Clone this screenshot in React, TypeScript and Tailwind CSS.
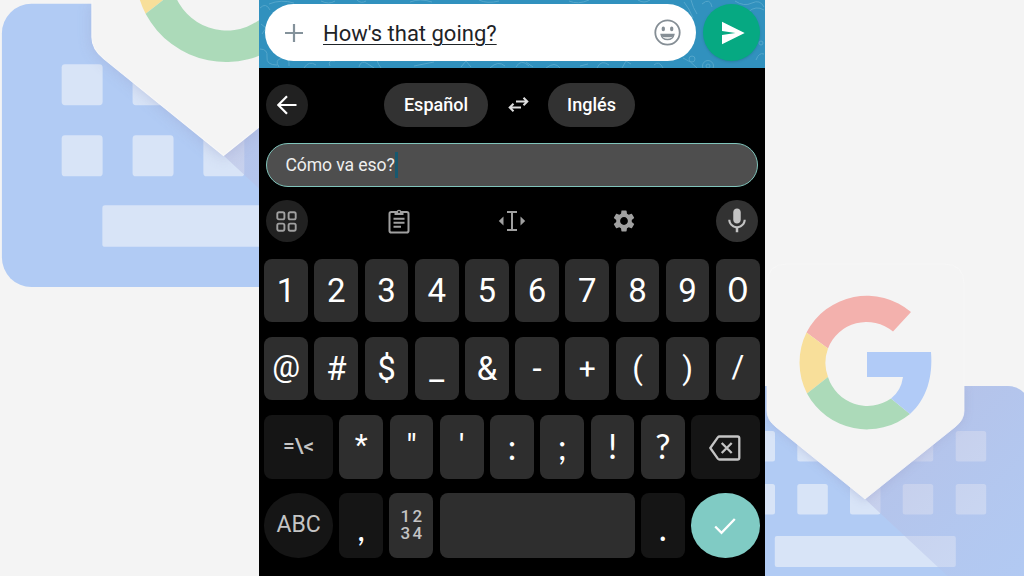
import clsx from "clsx";
import { MdMic, MdSettings } from "react-icons/md";

type KeyItem = {
  label: string;
  // fine tuning of the glyph inside the key
  className?: string;
};

const numberKeys: KeyItem[] = [
  { label: "1" },
  { label: "2" },
  { label: "3" },
  { label: "4" },
  { label: "5" },
  { label: "6" },
  { label: "7" },
  { label: "8" },
  { label: "9" },
  { label: "0", className: "font-['Lato'] text-[34px] pb-[3px]" },
];

const symbolKeys: KeyItem[] = [
  { label: "@", className: "text-[31px] pb-1" },
  { label: "#" },
  { label: "$" },
  { label: "_" },
  { label: "&" },
  { label: "-" },
  { label: "+", className: "text-[30px]" },
  { label: "(", className: "text-[31px]" },
  { label: ")", className: "text-[31px]" },
  { label: "/", className: "text-[31px] pb-1" },
];

const punctuationKeys: KeyItem[] = [
  { label: "*", className: "text-[30px] pb-1" },
  { label: '"' },
  { label: "'" },
  { label: ":", className: "font-['Lato'] text-[34px]" },
  { label: ";", className: "font-['Lato'] text-[34px]" },
  { label: "!", className: "font-['Lato'] text-[34px] pb-[2px]" },
  { label: "?", className: "font-['Lato'] text-[34px] pb-[2px]" },
];

function Key({ label, className }: KeyItem) {
  return (
    <button className="flex h-full flex-1 items-center justify-center rounded-lg bg-[#2e2e2e] text-white">
      <span className={clsx("leading-none", className ?? "text-[33px]")}>
        {label}
      </span>
    </button>
  );
}

// Keyboard with the G card on top
function GboardArt({ id }: { id: string }) {
  return (
    <>
      <defs>
        <linearGradient
          id={`${id}-shade`}
          gradientUnits="userSpaceOnUse"
          x1="110"
          y1="440"
          x2="260"
          y2="590"
        >
          <stop offset="0" stopColor="#b8bce0" stopOpacity="0.6" />
          <stop offset="1" stopColor="#b3c6ef" stopOpacity="0.3" />
        </linearGradient>
        <filter id={`${id}-blur`} x="-20%" y="-20%" width="140%" height="140%">
          <feGaussianBlur stdDeviation="5" />
        </filter>
        <clipPath id={`${id}-clip`}>
          <rect x="-65" y="386" width="330" height="211" rx="22" />
        </clipPath>
      </defs>
      <rect x="-65" y="386" width="330" height="211" rx="22" fill="#b1cbf4" />
      <g fill="#d8e4f7">
        {[-20.5, 32.3, 85, 137.7, 190.7].map((x) => (
          <g key={x}>
            <rect x={x} y="431" width="30.5" height="30.5" rx="2.5" />
            <rect x={x} y="484" width="30.5" height="30.5" rx="2.5" />
          </g>
        ))}
        <rect x="9.8" y="536" width="181" height="31" rx="2" />
      </g>
      <g clipPath={`url(#${id}-clip)`}>
        <path
          d="M100 499 205 597H265V386H199V413Z"
          fill={`url(#${id}-shade)`}
        />
        <path
          d="M2 386V413Q2 420 10 427L100 501L190 427Q199 420 199 413V386Z"
          fill="#9da4cd"
          opacity="0.45"
          filter={`url(#${id}-blur)`}
        />
      </g>
      <path
        d="M22 264H179Q199 264 199 284V411Q199 420 190 427L100 499L11 427Q2 420 2 411V284Q2 264 22 264Z"
        fill="#f4f4f4"
        stroke="#f8f8f8"
        strokeWidth="0.8"
      />
      <path
        d="M146 312A68 68 0 0 0 41.5 332.5L63 348.5A41.3 41.3 0 0 1 128 331.500Z"
        fill="#f3b1ad"
      />
      <path
        d="M41.5 332.5A68 68 0 0 0 42 393.5L63 377A41.3 41.3 0 0 1 63 348.5Z"
        fill="#f8df9a"
      />
      <path
        d="M42 393.5A68 68 0 0 0 145 414L126 398.5A41.3 41.3 0 0 1 63 377Z"
        fill="#acdab9"
      />
      <path
        d="M102 352H166C168 376 162 399 145 414L126 398.5Q136 391 138 377H102Z"
        fill="#b1cbf7"
      />
    </>
  );
}

function ChatBar() {
  return (
    <div className="relative flex h-[68px] shrink-0 items-start bg-[#3191be] pt-1 pl-1.5">
      {/* Wallpaper doodles */}
      <svg
        className="absolute inset-0"
        width="506"
        height="68"
        fill="none"
        stroke="#54a6cb"
        strokeWidth="1"
      >
        <path d="M1 8q6-6 10 2M2 24l5 4-4 6M1 49q8 0 7 8T18 65M20 67q-5-7 3-9t7 8M45 68q5-8 12-3M71 66q-3-6 5-5M100 67q2-8 9-3l6 4M122 68q-6-8-3-13M155 66l20-4M202 67l5-6 5 6M231 68q8-8 15-2M257 67q5-9 13-1M267 62l7 5M287 68q9-7 14 0M321 66l8-2M338 68q4-9 12-3M363 68l4-7 5 3M395 65q5-5 9 3M424 58q8 3 14 10" />
        <path d="M10 4q12-5 25-1M62 1q8 4 14 0M98 0q4 4 9 1M151 2q10-4 22 0M220 0q8 4 20 1M310 1q9 4 20-1M379 0q6 4 12 0M425 2q5 6 9 16M432 0q2 8 6 14M443 4q8-7 10 3M476 1q9 6 17 2t12 4M489 12q8-7 16-2M497 60q3-8 8-6" />
        <circle cx="433" cy="59" r="3" />
        <circle cx="449" cy="66" r="5.5" />
        <circle cx="449" cy="66" r="2" />
        <circle cx="502" cy="43" r="2" />
      </svg>
      <div className="relative flex h-[57px] w-[430.5px] items-center rounded-full bg-white pr-[14.5px] pl-[19.5px]">
        <svg width="18" height="18" stroke="#84929b" strokeWidth="2.2">
          <path d="M9 0v18M0 9h18" />
        </svg>
        <span className="ml-[20.5px] flex-1 pt-[2px] text-[22px] leading-none text-[#1e2327] underline decoration-1 underline-offset-[3px]">
          How&apos;s that going?
        </span>
        <svg width="27" height="27" fill="none" stroke="#858e95">
          <circle cx="13.5" cy="13.5" r="12.2" strokeWidth="1.8" />
          <ellipse cx="9.3" cy="9.9" rx="1.7" ry="2.4" fill="#858e95" stroke="none" />
          <ellipse cx="17.7" cy="9.9" rx="1.7" ry="2.4" fill="#858e95" stroke="none" />
          <path d="M7 15.3h13c-.6 3.3-3 5.2-6.5 5.2S7.6 18.6 7 15.3Z" strokeWidth="1.3" />
          <path d="M7.5 15.5h12l-.7 2.2c-3 .8-7.6.8-10.6 0Z" fill="#858e95" stroke="none" />
        </svg>
      </div>
      <button className="relative ml-[7px] flex size-[57px] items-center justify-center rounded-full bg-[#06a982] shadow-sm">
        <svg className="ml-[3px]" width="24" height="24" fill="#fff">
          <path d="M1 .8 23.7 12 1 23.2V14L14.5 12 1 10Z" />
        </svg>
      </button>
    </div>
  );
}

function TranslateBar() {
  return (
    <div className="flex h-[44.5px] items-center pl-[6.5px] text-[18px] font-medium text-white">
      <button className="flex size-[42px] items-center justify-center rounded-full bg-[#212121]">
        <svg width="20" height="20" fill="none" stroke="#fff" strokeWidth="2.2">
          <path d="M19.5 10H1.5M10 1.2 1.3 10l8.7 8.8" />
        </svg>
      </button>
      <button className="ml-[76.500px] h-full w-[104px] rounded-full bg-[#323232]">
        Español
      </button>
      <svg
        className="mx-[19.5px]"
        width="21"
        height="17"
        fill="none"
        stroke="#dedede"
        strokeWidth="2"
      >
        <path d="M8 5.500h11.200M15.500 1.800 19.300 5.500 15.500 9.200M13 11.500H1.800M5.500 7.800l-3.800 3.700L5.500 15.200" />
      </svg>
      <button className="h-full w-[87px] rounded-full bg-[#323232]">Inglés</button>
    </div>
  );
}

function Toolbar() {
  return (
    <div className="mt-[13px] flex h-[42px] items-center justify-between pr-[7.500px] pl-[6.500px] text-[#a0a0a0]">
      <button className="flex size-[42px] items-center justify-center rounded-full bg-[#212121]">
        <svg width="21" height="21" fill="none" stroke="currentColor" strokeWidth="1.9">
          <rect x="1.3" y="1.3" width="7.1" height="7.1" rx="1.6" />
          <rect x="12.6" y="1.3" width="7.1" height="7.1" rx="1.6" />
          <rect x="1.3" y="12.6" width="7.1" height="7.1" rx="1.6" />
          <rect x="12.6" y="12.6" width="7.1" height="7.1" rx="1.6" />
        </svg>
      </button>
      <button className="flex w-[42px] justify-center">
        <svg width="22" height="26" fill="none" stroke="currentColor" strokeWidth="2">
          <rect x="1.5" y="4" width="19" height="20.5" rx="1.8" />
          <path d="M5.5 10.8h11M5.5 14.8h11M5.5 18.8h7.5" />
          <path d="M6.5 3.5h1.9a2.8 2.8 0 0 1 5.2 0h1.9V7h-9Z" fill="currentColor" stroke="none" />
          <circle cx="11" cy="3.9" r="1" fill="#000" stroke="none" />
        </svg>
      </button>
      <button className="flex w-[42px] justify-center">
        <svg width="28" height="22" fill="none" stroke="currentColor" strokeWidth="2">
          <path d="M9 2h10M9 20h10M14 2v18" />
          <path d="M5.5 6.5v9L.8 11ZM22.5 6.5v9L27.2 11Z" fill="currentColor" stroke="none" />
        </svg>
      </button>
      <button className="flex w-[42px] justify-center">
        <MdSettings size={26} />
      </button>
      <button className="flex size-[42px] items-center justify-center rounded-full bg-[#323232]">
        <MdMic size={30} className="text-[#c4c4c4]" />
      </button>
    </div>
  );
}

function Keyboard() {
  return (
    <div className="mt-[16.8px] flex flex-col gap-[14.7px] px-[5.3px]">
      <div className="flex h-[63.5px] gap-[6.5px]">
        {numberKeys.map((k) => (
          <Key key={k.label} {...k} />
        ))}
      </div>
      <div className="flex h-[63.5px] gap-[6.5px]">
        {symbolKeys.map((k) => (
          <Key key={k.label} {...k} />
        ))}
      </div>
      <div className="flex h-[63.5px] gap-[6.5px]">
        <button className="w-[68.5px] rounded-lg bg-[#151515] text-[21px] font-medium text-[#c4c4c4]">
          {"=\\<"}
        </button>
        {punctuationKeys.map((k) => (
          <Key key={k.label} {...k} />
        ))}
        <button className="flex w-[68.5px] items-center justify-center rounded-lg bg-[#151515] pt-[3px]">
          <svg
            width="32"
            height="26"
            fill="none"
            stroke="#c4c4c4"
            strokeWidth="2.3"
            strokeLinejoin="round"
          >
            <path d="M10.5 1.5H28.5Q30.3 1.5 30.3 3.3V22.7Q30.3 24.5 28.5 24.5H10.5Q9.5 24.5 8.8 23.6L1.3 13 8.8 2.4Q9.5 1.5 10.5 1.5Z" />
            <path d="m12.7 8 10 10M22.7 8l-10 10" />
          </svg>
        </button>
      </div>
      <div className="flex h-[64.5px] gap-[6.5px] text-white">
        <button className="w-[68.5px] rounded-[50%] bg-[#151515] text-[23px] text-[#c4c4c4]">
          ABC
        </button>
        <button className="w-[43.7px] rounded-lg bg-[#151515] pt-1 font-['Lato'] text-[34px] leading-none">
          ,
        </button>
        <button className="flex w-[43.7px] flex-col items-center justify-center rounded-lg bg-[#2e2e2e] pb-px text-[17px] leading-[17px] font-medium tracking-[2.5px] text-[#c4c4c4]">
          <span className="pl-[2.5px]">12</span>
          <span className="pl-[2.5px]">34</span>
        </button>
        <button className="flex-1 rounded-lg bg-[#2e2e2e]" />
        <button className="w-[43.7px] rounded-lg bg-[#151515] pt-1 font-['Lato'] text-[34px] leading-none">
          .
        </button>
        <button className="flex w-[68.5px] items-center justify-center rounded-[50%] bg-[#80cbc4]">
          <svg width="22" height="18" fill="none" stroke="#fff" strokeWidth="2.3">
            <path d="m1.2 9.5 6.3 6.3L20.8 2" />
          </svg>
        </button>
      </div>
    </div>
  );
}

export default function App() {
  return (
    <div className="flex h-[576px] w-[1024px] overflow-hidden bg-[#f4f4f4] font-['Roboto',sans-serif]">
      <svg className="shrink-0" width="259" height="576">
        <g transform="translate(223.5 155.5) scale(1.343) translate(-100 -499)">
          <GboardArt id="left" />
        </g>
      </svg>

      <main className="flex w-[506px] shrink-0 flex-col bg-black">
        <ChatBar />
        <div className="pt-[14.5px]">
          <TranslateBar />
          <div className="mr-[7px] ml-[6.5px] mt-[15.5px] flex h-[44.5px] items-center rounded-full border-[1.5px] border-[#80c4bb] bg-[#4e4e4e] pl-[19px]">
            <span className="text-[17.6px] tracking-[-0.1px] text-[#eeeeee]">
              Cómo va eso?
            </span>
            <span className="h-[26px] w-[3px] bg-[#17586f]" />
          </div>
          <Toolbar />
          <Keyboard />
        </div>
      </main>

      <svg className="shrink-0" width="259" height="576">
        <GboardArt id="right" />
      </svg>
    </div>
  );
}
